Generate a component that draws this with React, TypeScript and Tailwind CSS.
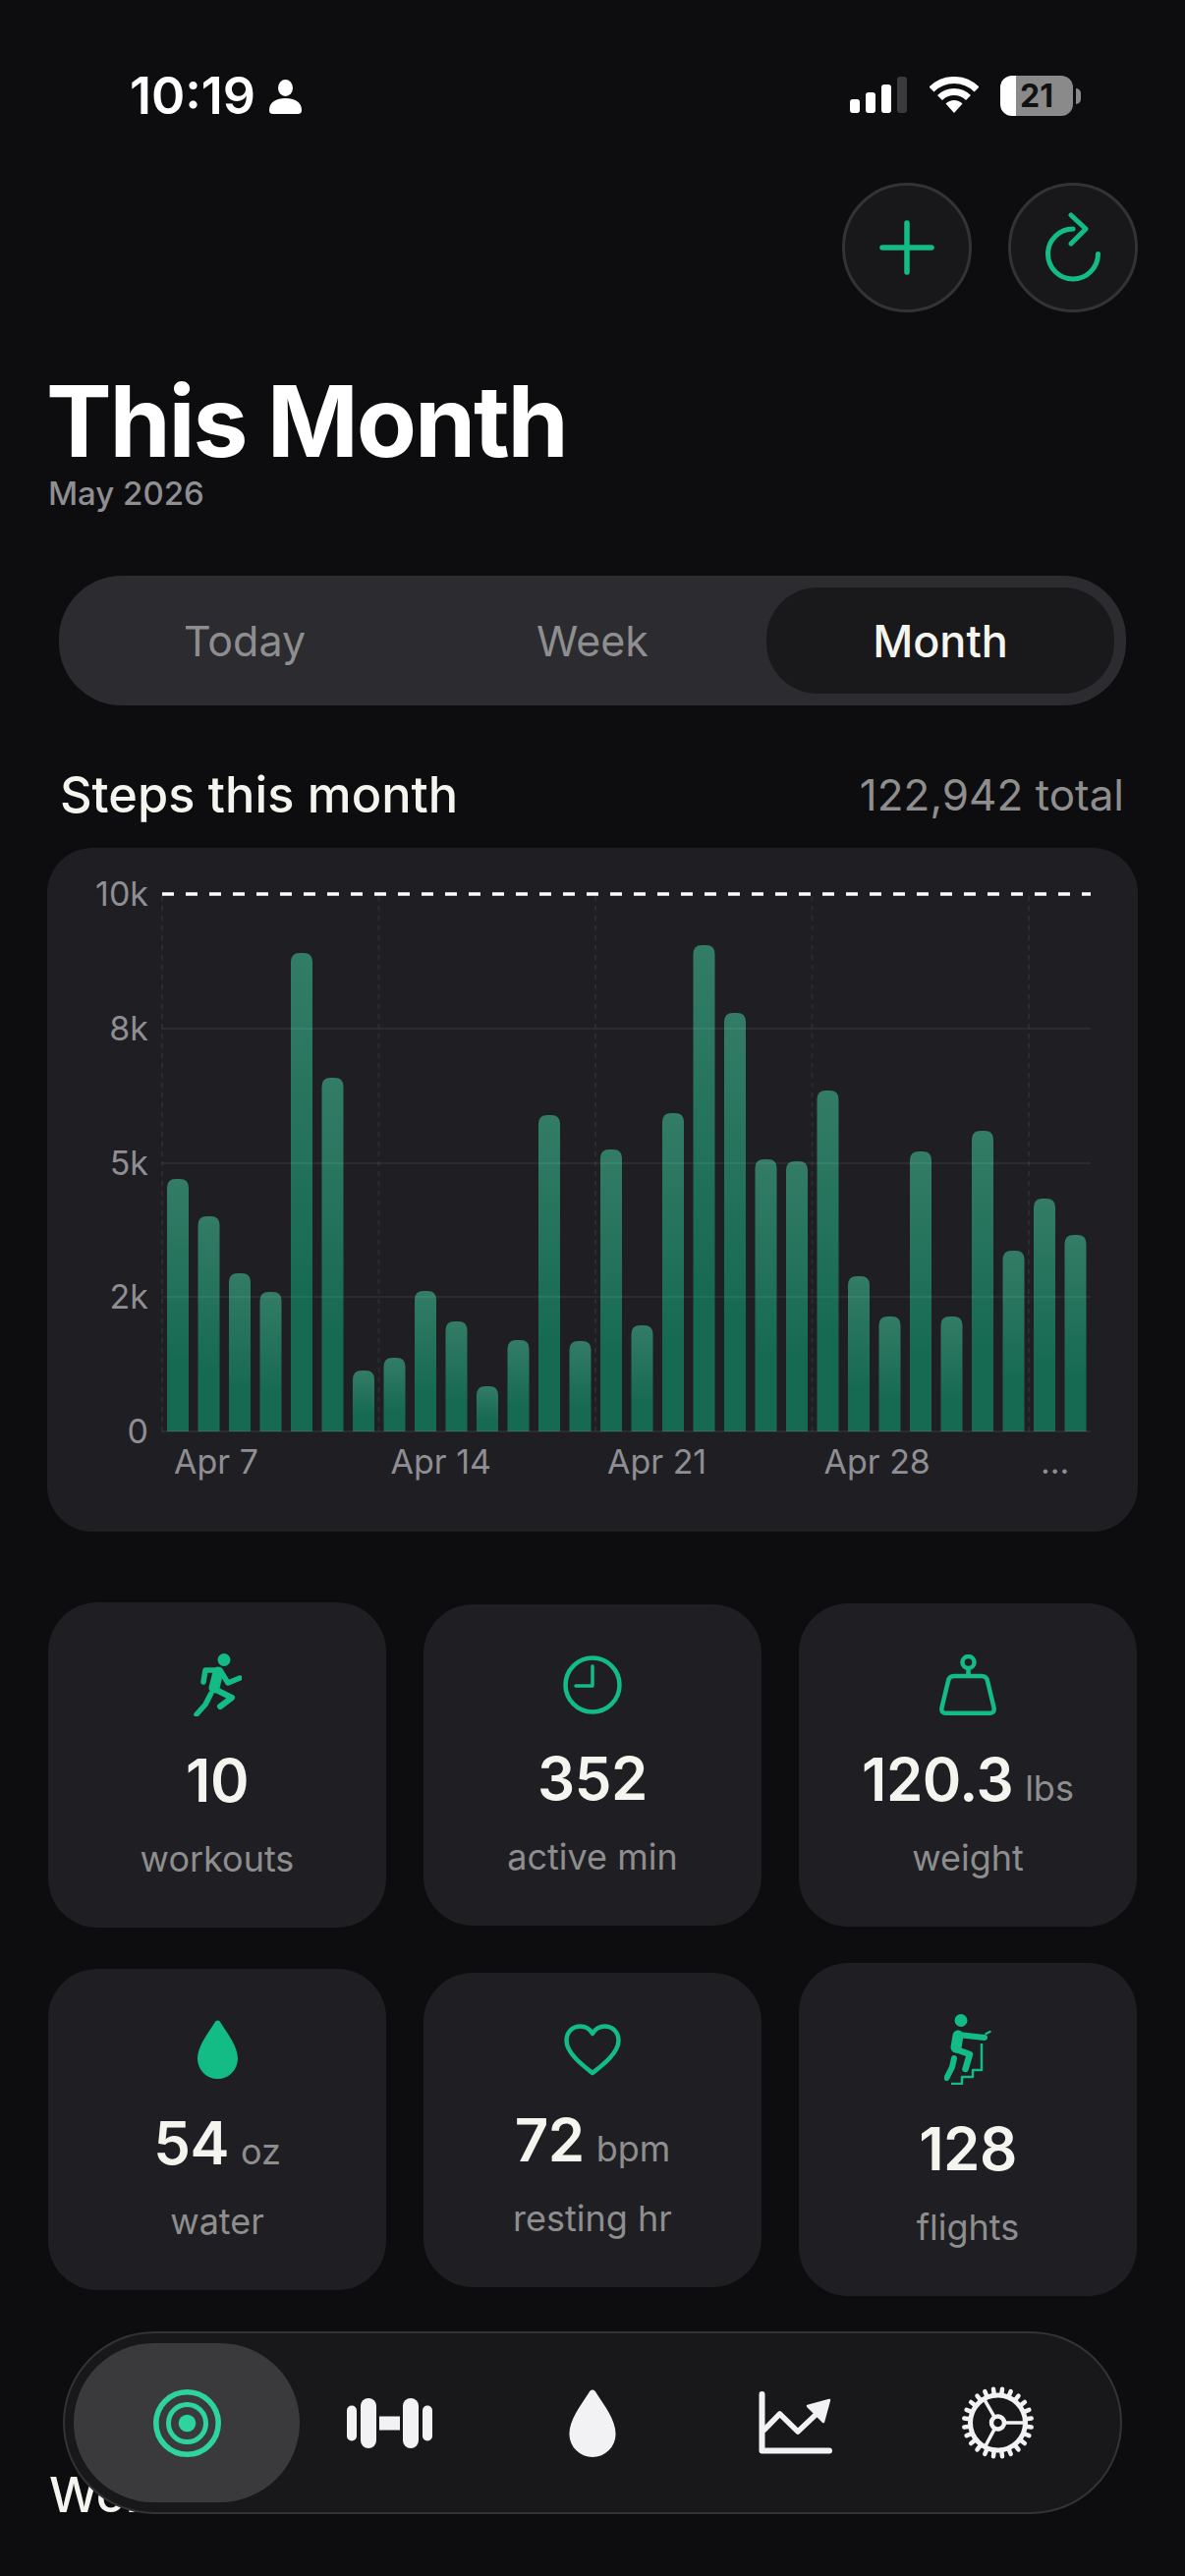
const steps = [257, 219, 161, 142, 487, 360, 62, 75, 143, 112, 46, 93, 322, 92, 287, 108, 324, 495, 426, 277, 275, 347, 158, 117, 285, 117, 306, 184, 237, 200];
const yTicks = [
  { label: "10k", y: 910 },
  { label: "8k", y: 1047 },
  { label: "5k", y: 1184 },
  { label: "2k", y: 1320 },
  { label: "0", y: 1457 },
];
const xTicks = [
  { label: "Apr 7", x: 165 },
  { label: "Apr 14", x: 385.5 },
  { label: "Apr 21", x: 606 },
  { label: "Apr 28", x: 826.5 },
  { label: "...", x: 1047 },
];

function StepsChart() {
  return (
    <svg viewBox="48 863 1110 696" className="block h-[696px] w-[1110px]">
      <defs>
        <linearGradient id="bar" x1="0" y1="0" x2="0" y2="1">
          <stop offset="0" stopColor="#337c66" />
          <stop offset="0.72" stopColor="#176a52" />
          <stop offset="1" stopColor="#176a52" />
        </linearGradient>
      </defs>
      {steps.map((h, i) => {
        const x = 170 + i * 31.5;
        const top = 1457 - h;
        return (
          <path
            key={i}
            d={`M${x} 1457V${top + 9}Q${x} ${top} ${x + 9} ${top}H${x + 13}Q${x + 22} ${top} ${x + 22} ${top + 9}V1457Z`}
            fill="url(#bar)"
          />
        );
      })}
      {xTicks.map((t) => (
        <line key={t.x} x1={t.x} x2={t.x} y1={912} y2={1457} stroke="#ffffff" strokeOpacity="0.06" strokeWidth="2" strokeDasharray="5 5" />
      ))}
      {yTicks.slice(1).map((t) => (
        <line key={t.y} x1={165} x2={1110} y1={t.y} y2={t.y} stroke="#ffffff" strokeOpacity="0.06" strokeWidth="2" />
      ))}
      <line x1={165} x2={1110} y1={910} y2={910} stroke="#ffffff" strokeWidth="3.5" strokeDasharray="12 12" />
      {yTicks.map((t) => (
        <text key={t.label} x={151} y={t.y + 12} textAnchor="end" fill="#8e8e93" fontSize="34">
          {t.label}
        </text>
      ))}
      {xTicks.map((t) => (
        <text key={t.label} x={t.x + 12} y={1500} fill="#8e8e93" fontSize="34">
          {t.label}
        </text>
      ))}
    </svg>
  );
}

function RunnerIcon() {
  return (
    <svg width="49" height="64" viewBox="0 0 49 64" fill="none" stroke="#12bc84" strokeLinecap="round" strokeLinejoin="round">
      <circle cx="31" cy="6.5" r="6.5" fill="#12bc84" stroke="none" />
      <path d="M10 29L12 17H27L35 30L47 25" strokeWidth="5.5" />
      <path d="M25 19L21 35" strokeWidth="11" />
      <path d="M21 36L39 45L27 54" strokeWidth="6" />
      <path d="M17.6 41L12 52L3 62" strokeWidth="5.5" />
    </svg>
  );
}

function ClockIcon() {
  return (
    <svg width="60" height="60" viewBox="0 0 60 60" fill="none" stroke="#12bc84" strokeWidth="4.5" strokeLinecap="round" strokeLinejoin="round">
      <circle cx="30" cy="30" r="27.5" />
      <path d="M30 11V31H13" strokeWidth="3.5" />
    </svg>
  );
}

function WeightIcon() {
  return (
    <svg width="58" height="62" viewBox="0 0 58 62" fill="none" stroke="#12bc84" strokeWidth="4.5" strokeLinejoin="round">
      <circle cx="29.5" cy="8" r="6" />
      <path d="M29.5 14V22" />
      <path d="M15 22H43Q48 22 49 27L55.5 54Q56.5 59.8 51 59.8H7Q1.5 59.8 2.5 54L9 27Q10 22 15 22Z" />
    </svg>
  );
}

function DropIcon({ width, height, color }: { width: number; height: number; color: string }) {
  return (
    <svg width={width} height={height} viewBox="0 0 41 60">
      <path
        d="M20.5 0.5C22 0.5 23 1.8 24 3.5C31 14.5 41 27 41 39.5A20.5 20.5 0 0 1 0 39.5C0 27 10 14.5 17 3.5C18 1.8 19 0.5 20.5 0.5Z"
        fill={color}
      />
    </svg>
  );
}

function HeartIcon() {
  return (
    <svg width="58" height="53" viewBox="0 0 58 53" fill="none" stroke="#12bc84" strokeWidth="4.5" strokeLinejoin="round">
      <path d="M29 50C20 43 2.5 30 2.5 17C2.5 8 9 2.5 16.5 2.5C22 2.5 26.5 5.5 29 10C31.5 5.5 36 2.5 41.5 2.5C49 2.5 55.5 8 55.5 17C55.5 30 38 43 29 50Z" />
    </svg>
  );
}

function StairsIcon() {
  return (
    <svg width="48" height="72" viewBox="0 0 48 72" fill="none" stroke="#12bc84" strokeLinecap="round" strokeLinejoin="round">
      <circle cx="17" cy="6.5" r="6.5" fill="#12bc84" stroke="none" />
      <path d="M14 22L12 34" strokeWidth="11" />
      <path d="M14 21L41 24" strokeWidth="6" />
      <path d="M12 36L26 41L21.5 56" strokeWidth="6.5" />
      <path d="M10 45L8 54L2.5 65" strokeWidth="6" />
      <path d="M42.6 20L46.5 18" strokeWidth="2.5" />
      <path d="M38 30V57H29V64H18V71H7" strokeWidth="2.5" strokeLinecap="butt" />
    </svg>
  );
}

function TargetIcon() {
  return (
    <svg width="69" height="69" viewBox="0 0 69 69" fill="none" stroke="#2dd4a0">
      <circle cx="34.5" cy="34.5" r="31.7" strokeWidth="5.6" />
      <circle cx="34.5" cy="34.5" r="19" strokeWidth="5" />
      <circle cx="34.5" cy="34.5" r="8.8" fill="#2dd4a0" stroke="none" />
    </svg>
  );
}

function DumbbellIcon() {
  return (
    <svg width="87" height="51" viewBox="0 0 87 51" fill="#f2f2f4">
      <rect x="0" y="7.5" width="10" height="36" rx="5" />
      <rect x="14" y="0" width="16" height="51" rx="8" />
      <rect x="33" y="18.5" width="21" height="14" />
      <rect x="57" y="0" width="16" height="51" rx="8" />
      <rect x="77" y="7.5" width="10" height="36" rx="5" />
    </svg>
  );
}

function TrendIcon() {
  return (
    <svg width="75" height="64" viewBox="0 0 75 64" fill="none" stroke="#f2f2f4" strokeLinecap="round" strokeLinejoin="round">
      <path d="M3.5 3V60.5H72" strokeWidth="6" />
      <path d="M6 39L21.6 23L40 41L58 24" strokeWidth="5.5" />
      <path d="M72 9L50 15L66 31Z" fill="#f2f2f4" strokeWidth="2.5" />
    </svg>
  );
}

function GearIcon() {
  const teeth = Array.from({ length: 24 }, (_, i) => (i * 15 + 7.5) * (Math.PI / 180));
  const spokes = [0, 118, 240].map((a) => (a * Math.PI) / 180);
  return (
    <svg width="75" height="74" viewBox="0 0 75 74" fill="none" stroke="#f2f2f4" strokeLinecap="round">
      <circle cx="37.5" cy="37" r="28" strokeWidth="5" />
      <circle cx="37.5" cy="37" r="6.5" strokeWidth="4.5" />
      {teeth.map((a, i) => (
        <line
          key={i}
          x1={37.5 + 29 * Math.cos(a)}
          y1={37 + 29 * Math.sin(a)}
          x2={37.5 + 34.5 * Math.cos(a)}
          y2={37 + 34.5 * Math.sin(a)}
          strokeWidth="4.5"
        />
      ))}
      {spokes.map((a, i) => (
        <line
          key={i}
          x1={37.5 + 8 * Math.cos(a)}
          y1={37 + 8 * Math.sin(a)}
          x2={37.5 + 28 * Math.cos(a)}
          y2={37 + 28 * Math.sin(a)}
          strokeWidth="3.5"
        />
      ))}
    </svg>
  );
}

function PlusIcon() {
  return (
    <svg width="56" height="56" viewBox="0 0 56 56" fill="none" stroke="#12bc84" strokeWidth="5.5" strokeLinecap="round">
      <path d="M28 3V53M3 28H53" />
    </svg>
  );
}

function RefreshIcon() {
  return (
    <svg width="58" height="72" viewBox="0 0 58 72" fill="none" stroke="#12bc84" strokeWidth="5" strokeLinecap="round" strokeLinejoin="round">
      <path d="M29 17A25.500 25.500 0 1 0 54.500 42.500" />
      <path d="M27 3L42 17L27 32" />
    </svg>
  );
}

function CircleButton({ children }: { children: React.ReactNode }) {
  return (
    <button className="flex h-[132px] w-[132px] items-center justify-center rounded-full border-[3px] border-[#333336] bg-[#18181a]">
      {children}
    </button>
  );
}

function StatCard({ icon, value, unit, label }: { icon: React.ReactNode; value: string; unit?: string; label: string }) {
  return (
    <div className="flex flex-col items-center rounded-[50px] bg-[#1f1e23] pb-[48px] pt-[52px]">
      <div className="flex">{icon}</div>
      <div className="mt-[35px] flex items-baseline gap-[12px] text-[60px] font-semibold leading-[60px] tracking-[-0.5px] text-[#f5f5f0]">
        {value}
        {unit && <span className="text-[36px] font-normal leading-[36px] tracking-normal text-[#8e8e8e]">{unit}</span>}
      </div>
      <div className="mt-[28px] text-[36px] leading-[44px] text-[#8e8e8e]">{label}</div>
    </div>
  );
}

export default function App() {
  return (
    <div className="relative h-[2622px] w-[1206px] overflow-hidden bg-[#0d0d0f] font-[family-name:Inter,sans-serif]">
      {/* status bar */}
      <div className="flex h-[118px] items-end justify-between pl-[132px] pr-[106px]">
        <div className="flex items-end gap-[14px]">
          <span className="text-[52px] font-semibold leading-[41px] text-white">10:19</span>
          <svg width="33" height="35" viewBox="0 0 33 35" fill="#fff" className="mb-[2px]">
            <ellipse cx="16.500" cy="8.500" rx="7.500" ry="8.500" />
            <path d="M0 31C0 23 7 19 16.500 19C26 19 33 23 33 31C33 33.500 32 35 29 35H4C1 35 0 33.500 0 31Z" />
          </svg>
        </div>
        <div className="flex items-center">
          <div className="mb-[2px] flex h-[37px] items-end gap-[6px]">
            <div className="h-[14px] w-[10px] rounded-[3px] bg-white" />
            <div className="h-[21px] w-[10px] rounded-[3px] bg-white" />
            <div className="h-[29px] w-[10px] rounded-[3px] bg-white" />
            <div className="h-[37px] w-[10px] rounded-[3px] bg-[#3a3a3c]" />
          </div>
          <svg width="50" height="37" viewBox="0 0 50 37" fill="none" stroke="#fff" strokeWidth="7" className="mb-[2px] ml-[23px]">
            <path d="M2 13A32.500 32.500 0 0 1 48 13" />
            <path d="M10.500 21.500A20.500 20.500 0 0 1 39.500 21.500" />
            <path d="M25 37L16.500 27.500A12 12 0 0 1 33.500 27.500Z" fill="#fff" stroke="none" />
          </svg>
          <div className="ml-[22px] flex h-[41px] w-[74px] items-center justify-center rounded-[12px] bg-[linear-gradient(90deg,#fff_16px,#8a8a8a_16px)] text-[32px] font-bold leading-none text-[#111]">
            21
          </div>
          <div className="ml-[3px] h-[16px] w-[5px] rounded-r-full bg-[#8a8a8a]" />
        </div>
      </div>

      {/* header actions */}
      <div className="mt-[68px] flex justify-end gap-[37px] pr-[48px]">
        <CircleButton>
          <PlusIcon />
        </CircleButton>
        <CircleButton>
          <RefreshIcon />
        </CircleButton>
      </div>

      <h1 className="ml-[47px] mt-[61px] text-[100px] font-bold leading-[100px] tracking-[-2.2px] text-white">This Month</h1>
      <p className="ml-[49px] mt-[3px] text-[33px] font-medium leading-[40px] text-[#8e8e93]">May 2026</p>

      {/* range tabs */}
      <div className="ml-[60px] mt-[64px] grid h-[132px] w-[1086px] grid-cols-3 items-center rounded-[64px] bg-[#2c2b30] p-[12px] text-[43px] leading-none text-[#8e8e8e]">
        <div className="text-center">Today</div>
        <div className="text-center">Week</div>
        <div className="flex h-[108px] items-center justify-center rounded-[52px] bg-[#19181b] text-[45px] font-medium text-[#f5f5f0]">Month</div>
      </div>

      <div className="mt-[60px] flex h-[62px] items-center justify-between pl-[61px] pr-[62px]">
        <div className="text-[50.5px] font-medium text-[#f5f5f0]">Steps this month</div>
        <div className="text-[44px] text-[#8e8e8e]">122,942 total</div>
      </div>

      <div className="ml-[48px] mt-[23px] h-[696px] w-[1110px] rounded-[46px] bg-[#1f1e23]">
        <StepsChart />
      </div>

      {/* stats */}
      <div className="ml-[49px] mt-[72px] grid w-[1108px] grid-cols-3 items-center gap-x-[38px] gap-y-[36px]">
        <StatCard icon={<RunnerIcon />} value="10" label="workouts" />
        <StatCard icon={<ClockIcon />} value="352" label="active min" />
        <StatCard icon={<WeightIcon />} value="120.3" unit="lbs" label="weight" />
        <StatCard icon={<DropIcon width={41} height={60} color="#12bc84" />} value="54" unit="oz" label="water" />
        <StatCard icon={<HeartIcon />} value="72" unit="bpm" label="resting hr" />
        <StatCard icon={<StairsIcon />} value="128" label="flights" />
      </div>

      <h2 className="ml-[50px] mt-[171px] text-[50px] font-medium leading-[62px] text-[#f5f5f0]">Workouts</h2>

      {/* tab bar floats over the page */}
      <nav className="absolute left-[64px] top-[2373px] grid h-[186px] w-[1078px] grid-cols-5 rounded-[93px] border-2 border-[#333336] bg-[#18181a] pl-[21px] pr-[21px]">
        <div className="relative flex items-center justify-center">
          <div className="absolute left-[-12px] right-[-12px] top-[10px] h-[162px] rounded-[81px] bg-[#3a3a3c]" />
          <div className="relative flex">
            <TargetIcon />
          </div>
        </div>
        <div className="flex items-center justify-center">
          <DumbbellIcon />
        </div>
        <div className="flex items-center justify-center">
          <DropIcon width={48} height={69} color="#f2f2f4" />
        </div>
        <div className="flex items-center justify-center">
          <TrendIcon />
        </div>
        <div className="flex items-center justify-center">
          <GearIcon />
        </div>
      </nav>
    </div>
  );
}
